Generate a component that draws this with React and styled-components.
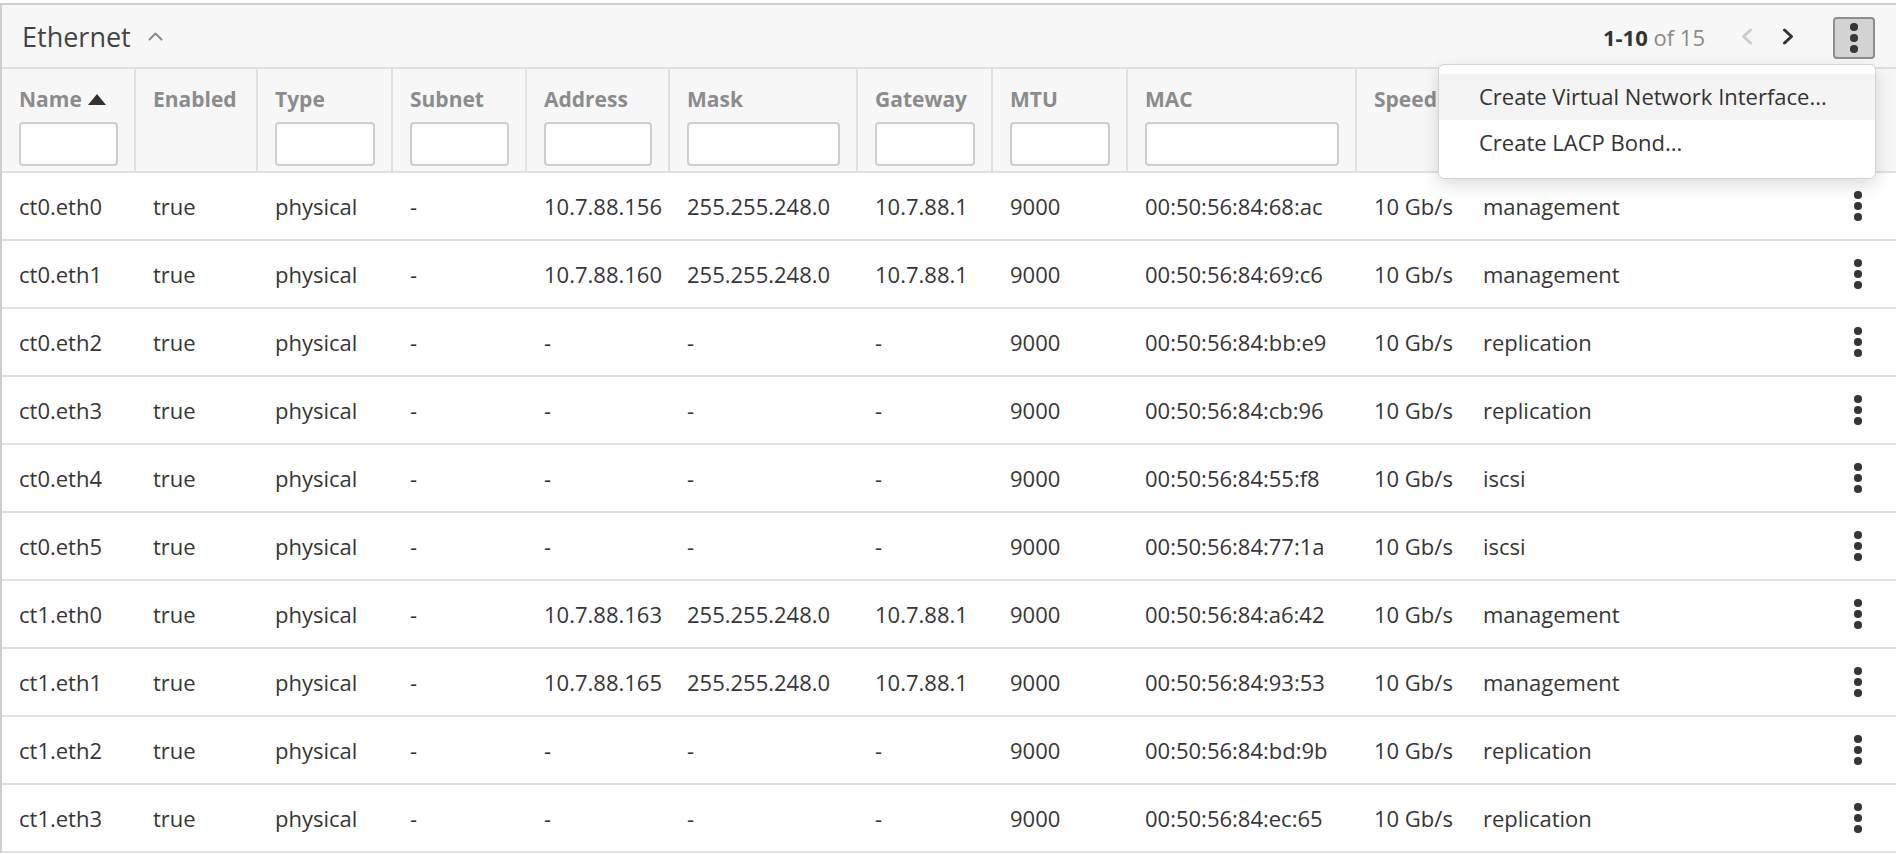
import React from 'react';
import styled, {createGlobalStyle} from 'styled-components';

const GlobalStyle = createGlobalStyle`
    html, body {
        margin: 0;
        padding: 0;
        background: #fff;
    }
    body {
        font-family: "Open Sans", "Liberation Sans", sans-serif;
        color: #333;
    }
`;

const COLUMNS = '134px 122px 135px 134px 143px 188px 135px 135px 229px 109px 1fr 76px';

const Panel = styled.div`
    margin-top: 3px;
    border-top: 2px solid #cfcfcf;
    border-left: 2px solid #cfcfcf;
    background: #fff;
`;

const TitleBar = styled.div`
    height: 62px;
    display: flex;
    align-items: center;
    padding: 0 21px 0 20px;
    background: #f7f7f7;
    border-bottom: 2px solid #e0e0e0;
`;

const Title = styled.h2`
    margin: 0;
    font-size: 27px;
    font-weight: 400;
    color: #444;
    display: flex;
    align-items: center;
    gap: 17px;
`;

const Spacer = styled.div`
    flex: 1;
`;

const PageInfo = styled.div`
    font-size: 22px;
    color: #8a8a8a;
    margin-right: 26px;
    margin-top: 2px;

    b {
        font-weight: 700;
        color: #333;
    }
`;

const NavButton = styled.button`
    width: 30px;
    height: 42px;
    padding: 0;
    border: 0;
    background: none;
    display: flex;
    align-items: center;
    justify-content: center;
    color: ${({disabled}) => (disabled ? '#cccccc' : '#333')};
    & + & {
        margin-left: 12px;
    }
`;

const MenuAnchor = styled.div`
    position: relative;
    margin-left: 30px;
    margin-top: 4px;
`;

const KebabButton = styled.button`
    width: 42px;
    height: 42px;
    padding: 0;
    box-sizing: border-box;
    border: 2px solid #8e8e8e;
    border-radius: 4px;
    background: #d3d3d3;
    display: flex;
    align-items: center;
    justify-content: center;
`;

const Dots = styled.span`
    display: flex;
    flex-direction: column;
    gap: 3.5px;

    i {
        width: 7.5px;
        height: 7.5px;
        border-radius: 50%;
        background: #363636;
    }
`;

const Menu = styled.ul`
    position: absolute;
    top: calc(100% + 5px);
    right: -1px;
    width: 438px;
    box-sizing: border-box;
    margin: 0;
    padding: 9px 0 12px;
    list-style: none;
    background: #fff;
    border: 1px solid #d2d2d2;
    border-radius: 6px;
    box-shadow: 0 6px 18px rgba(0, 0, 0, 0.14);
    z-index: 5;
`;

const MenuItem = styled.li`
    height: 46px;
    display: flex;
    align-items: center;
    padding-left: 40px;
    padding-bottom: 3px;
    box-sizing: border-box;
    font-size: 22px;
    color: #333;
    background: ${({active}) => (active ? '#f4f4f4' : '#fff')};
`;

const HeaderRow = styled.div`
    display: grid;
    grid-template-columns: ${COLUMNS};
    height: 102px;
    background: #f7f7f7;
    border-bottom: 2px solid #e0e0e0;
`;

const HeaderCell = styled.div`
    display: flex;
    flex-direction: column;
    padding: 17px 16px 0 17px;
    border-right: ${({last}) => (last ? 'none' : '2px solid #e0e0e0')};
    min-width: 0;
`;

const HeaderLabel = styled.div`
    display: flex;
    align-items: center;
    gap: 6px;
    height: 26px;
    font-size: 21px;
    font-weight: 700;
    color: #8c8c8c;
    white-space: nowrap;
`;

const SortArrow = styled.span`
    width: 0;
    height: 0;
    border-left: 9px solid transparent;
    border-right: 9px solid transparent;
    border-bottom: 11px solid #333;
`;

const FilterInput = styled.input`
    margin-top: 10px;
    height: 44px;
    width: 100%;
    box-sizing: border-box;
    border: 2px solid #cdcdcd;
    border-radius: 4px;
    background: #fff;
    outline: none;
    font: inherit;
`;

const Row = styled.div`
    display: grid;
    grid-template-columns: ${COLUMNS};
    align-items: center;
    height: 66px;
    border-bottom: 2px solid #e0e0e0;
    font-size: 22px;
    color: #363636;
`;

const Cell = styled.div`
    padding-left: 17px;
    white-space: nowrap;
`;

const ActionCell = styled.div`
    display: flex;
    justify-content: center;
`;

const ChevronLeft = () => (
    <svg width="13" height="17" viewBox="0 0 13 17">
        <path d="M10.5 2 L3.5 8.5 L10.5 15" fill="none" stroke="currentColor" strokeWidth="3" strokeLinecap="round" strokeLinejoin="round" />
    </svg>
);

const ChevronRight = () => (
    <svg width="13" height="17" viewBox="0 0 13 17">
        <path d="M2.5 2 L9.5 8.5 L2.5 15" fill="none" stroke="currentColor" strokeWidth="3" strokeLinecap="round" strokeLinejoin="round" />
    </svg>
);

const ChevronUp = () => (
    <svg width="15" height="9" viewBox="0 0 15 9">
        <path d="M1.5 7.5 L7.5 1.5 L13.5 7.5" fill="none" stroke="#8a8a8a" strokeWidth="2" strokeLinecap="round" strokeLinejoin="round" />
    </svg>
);

const Kebab = () => (
    <Dots><i /><i /><i /></Dots>
);

// the last filter column sits under the open menu, so its label is not shown
const columns = [
    {key: 'name', label: 'Name', filter: true, sorted: true},
    {key: 'enabled', label: 'Enabled'},
    {key: 'type', label: 'Type', filter: true},
    {key: 'subnet', label: 'Subnet', filter: true},
    {key: 'address', label: 'Address', filter: true},
    {key: 'mask', label: 'Mask', filter: true},
    {key: 'gateway', label: 'Gateway', filter: true},
    {key: 'mtu', label: 'MTU', filter: true},
    {key: 'mac', label: 'MAC', filter: true},
    {key: 'speed', label: 'Speed'},
    {key: 'services', label: '', filter: true},
];

const rows = [
    ['ct0.eth0', '10.7.88.156', '255.255.248.0', '10.7.88.1', '00:50:56:84:68:ac', 'management'],
    ['ct0.eth1', '10.7.88.160', '255.255.248.0', '10.7.88.1', '00:50:56:84:69:c6', 'management'],
    ['ct0.eth2', '-', '-', '-', '00:50:56:84:bb:e9', 'replication'],
    ['ct0.eth3', '-', '-', '-', '00:50:56:84:cb:96', 'replication'],
    ['ct0.eth4', '-', '-', '-', '00:50:56:84:55:f8', 'iscsi'],
    ['ct0.eth5', '-', '-', '-', '00:50:56:84:77:1a', 'iscsi'],
    ['ct1.eth0', '10.7.88.163', '255.255.248.0', '10.7.88.1', '00:50:56:84:a6:42', 'management'],
    ['ct1.eth1', '10.7.88.165', '255.255.248.0', '10.7.88.1', '00:50:56:84:93:53', 'management'],
    ['ct1.eth2', '-', '-', '-', '00:50:56:84:bd:9b', 'replication'],
    ['ct1.eth3', '-', '-', '-', '00:50:56:84:ec:65', 'replication'],
];

const App = () => {
    return (
        <>
            <GlobalStyle />
            <Panel>
                <TitleBar>
                    <Title>Ethernet <ChevronUp /></Title>
                    <Spacer />
                    <PageInfo><b>1-10</b> of 15</PageInfo>
                    <NavButton disabled><ChevronLeft /></NavButton>
                    <NavButton><ChevronRight /></NavButton>
                    <MenuAnchor>
                        <KebabButton><Kebab /></KebabButton>
                        <Menu>
                            <MenuItem active>Create Virtual Network Interface...</MenuItem>
                            <MenuItem>Create LACP Bond...</MenuItem>
                        </Menu>
                    </MenuAnchor>
                </TitleBar>
                <HeaderRow>
                    {columns.map(col => (
                        <HeaderCell key={col.key}>
                            <HeaderLabel>
                                {col.label}
                                {col.sorted && <SortArrow />}
                            </HeaderLabel>
                            {col.filter && <FilterInput />}
                        </HeaderCell>
                    ))}
                    <HeaderCell last />
                </HeaderRow>
                {rows.map(([name, address, mask, gateway, mac, services]) => (
                    <Row key={name}>
                        <Cell>{name}</Cell>
                        <Cell>true</Cell>
                        <Cell>physical</Cell>
                        <Cell>-</Cell>
                        <Cell>{address}</Cell>
                        <Cell>{mask}</Cell>
                        <Cell>{gateway}</Cell>
                        <Cell>9000</Cell>
                        <Cell>{mac}</Cell>
                        <Cell>10 Gb/s</Cell>
                        <Cell>{services}</Cell>
                        <ActionCell><Kebab /></ActionCell>
                    </Row>
                ))}
            </Panel>
        </>
    );
};

export default App;
